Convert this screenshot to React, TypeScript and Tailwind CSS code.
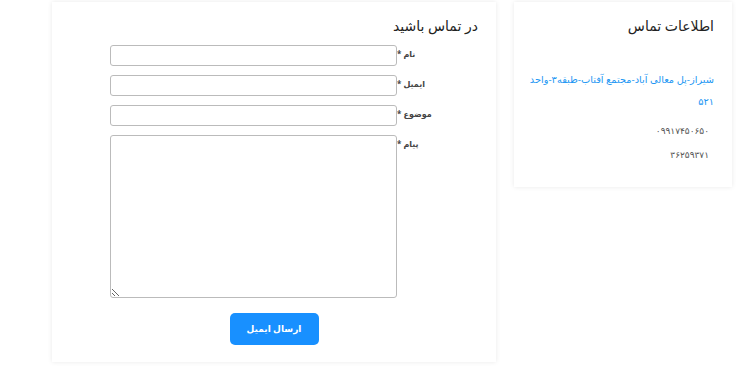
import React from 'react';

const fieldRows = ['نام', 'ایمیل', 'موضوع'];

export default function App() {
  return (
    <div
      dir="rtl"
      className="w-[750px] h-[371px] bg-white overflow-hidden font-['Noto_Sans','DejaVu_Sans',sans-serif] text-[#333]"
    >
      <div className="flex items-start gap-[18px] pr-[18px] pt-[2px]">
        {/* contact info */}
        <div className="w-[218px] h-[185px] bg-white shadow-[0_0_5px_rgba(0,0,0,0.09)] pr-[18px] pl-[6px] pt-[14px]">
          <h3 className="text-[14px] leading-[20px] text-[#222]">اطلاعات تماس</h3>
          <p className="mt-[33px] text-[9.8px] leading-[22px] text-[#2196f3]">
            <span className="whitespace-nowrap">شیراز-پل معالی آباد-مجتمع آفتاب-طبقه۳-واحد</span>
            <br />
            ۵۲۱
          </p>
          <p className="mt-[11px] pr-[5px] text-[9px] leading-[14px] text-[#555]">۰۹۹۱۷۴۵۰۶۵۰</p>
          <p className="mt-[10px] pr-[5px] text-[9px] leading-[14px] text-[#555]">۳۶۲۵۹۳۷۱</p>
        </div>

        {/* contact form */}
        <div className="w-[444px] h-[360px] bg-white shadow-[0_0_5px_rgba(0,0,0,0.09)] pt-[14px]">
          <h2 className="pr-[18px] text-[14px] leading-[20px] text-[#222]">در تماس باشید</h2>
          <form className="mt-[9px] pr-[64px] flex flex-col gap-[9px]">
            {fieldRows.map((label) => (
              <div key={label} className="flex items-start">
                <label className="w-[35px] pt-[3px] text-left whitespace-nowrap text-[8px] font-bold leading-[12px] text-[#444]">
                  {label} *
                </label>
                <input className="w-[287px] h-[21px] border border-[#bbb] rounded-[3px] bg-white" />
              </div>
            ))}
            <div className="flex items-start">
              <label className="w-[35px] pt-[3px] text-left whitespace-nowrap text-[8px] font-bold leading-[12px] text-[#444]">
                پیام *
              </label>
              <textarea className="w-[287px] h-[163px] border border-[#bbb] rounded-[3px] bg-white resize-y" />
            </div>
          </form>
          <div className="flex justify-center mt-[15px]">
            <button className="w-[89px] h-[32px] rounded-[5px] bg-[#1890ff] text-white text-[9px] font-bold">
              ارسال ایمیل
            </button>
          </div>
        </div>
      </div>
    </div>
  );
}
